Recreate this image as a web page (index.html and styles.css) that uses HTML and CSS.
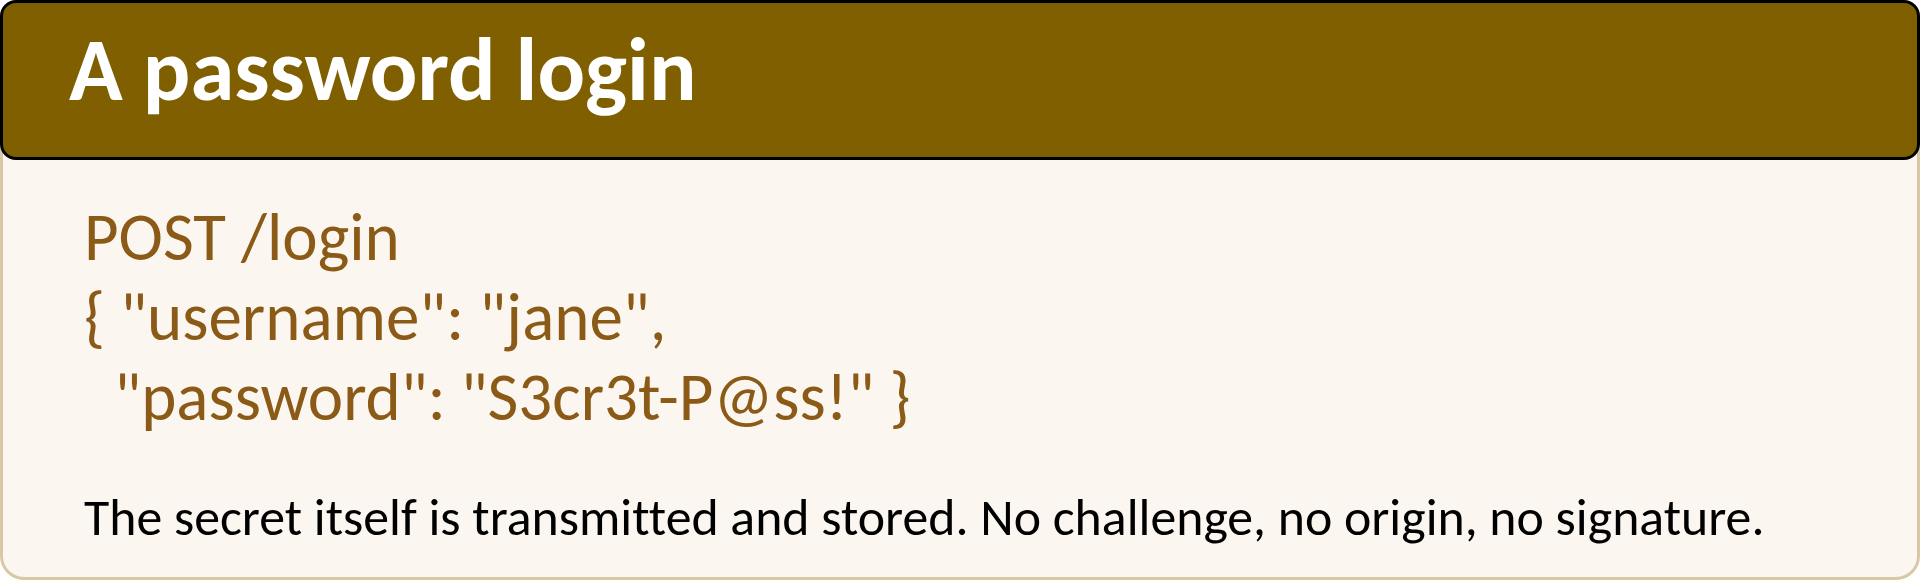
FILE: index.html
```html
<!DOCTYPE html>
<html lang="en">
<head>
<meta charset="utf-8">
<title>A password login</title>
<link rel="stylesheet" href="styles.css">
</head>
<body>
<div class="card">
  <div class="header">
    <h1 class="title">A password login</h1>
  </div>
  <div class="content">
    <pre class="code">POST /login
{ "username": "jane",
  "password": "S3cr3t-P@ss!" }</pre>
    <p class="note">The secret itself is transmitted and stored. No challenge, no origin, no signature.</p>
  </div>
</div>
</body>
</html>
```

FILE: styles.css
```css
html, body {
  margin: 0;
  padding: 0;
  background: #ffffff;
}

.card {
  box-sizing: border-box;
  width: 1920px;
  height: 580px;
  border: 3px solid #d9c8a6;
  border-radius: 24px;
  background: #fbf7f0;
  font-family: "Carlito", "Lato", sans-serif;
  display: flex;
  flex-direction: column;
}

.header {
  box-sizing: border-box;
  margin: -3px -3px 0 -3px;
  height: 160px;
  border: 3px solid #000000;
  border-radius: 16px;
  background: #7f5f00;
  padding: 0 0 20px 66px;
  display: flex;
  align-items: center;
}

.title {
  margin: 0;
  color: #ffffff;
  font-weight: 700;
  font-size: 88.7px;
  line-height: 1;
  font-variant-ligatures: none;
}

.content {
  padding: 37px 0 0 81px;
}

.code {
  margin: 0;
  font-family: "Carlito", "Lato", sans-serif;
  font-size: 67px;
  line-height: 80px;
  color: #8b5a17;
  white-space: pre;
  font-variant-ligatures: none;
}

.note {
  margin: 50px 0 0 0;
  font-size: 51.8px;
  line-height: 1.2;
  color: #000000;
  font-variant-ligatures: none;
}
```
